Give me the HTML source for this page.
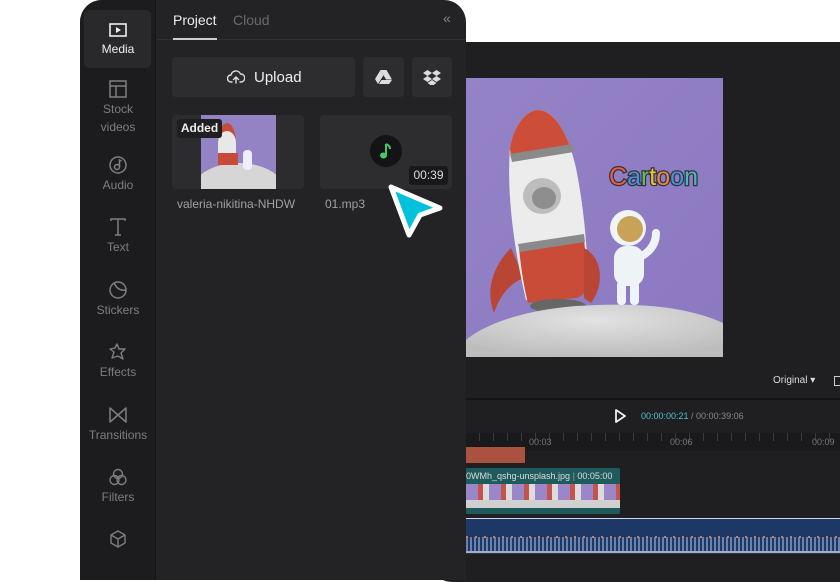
<!DOCTYPE html>
<html><head><meta charset="utf-8"><style>
*{margin:0;padding:0;box-sizing:border-box}
body{width:840px;height:560px;overflow:hidden;background:#fff;font-family:"Liberation Sans",sans-serif;position:relative}
.abs{position:absolute}
.back{left:430px;top:42px;width:440px;height:540px;background:#1f1f21;border-radius:22px}
.panel{left:80px;top:0;width:386px;height:580px;background:#232325;border-radius:22px 22px 0 0;overflow:hidden}
.side{left:0;top:0;width:76px;height:100%;background:#1c1c1e;border-right:1px solid #151517}
.item{position:absolute;left:0;width:76px;text-align:center;color:#7e7e82;font-size:12px;line-height:18px}
.item svg{display:block;margin:0 auto 2px}
.btn{background:#2d2d30;border-radius:4px}
.t{color:#9a9a9e;font-size:12px}
</style></head><body>
<div class="abs back"></div>
<!-- preview image -->
<svg class="abs" style="left:466px;top:78px" width="257" height="279" viewBox="0 0 257 279">
<defs><linearGradient id="bg" x1="0" y1="0" x2="1" y2="1"><stop offset="0" stop-color="#9583c6"/><stop offset="1" stop-color="#8b78c2"/></linearGradient>
<radialGradient id="moon" cx="0.5" cy="0.3" r="0.7"><stop offset="0" stop-color="#e2e2e2"/><stop offset="1" stop-color="#bdbdbd"/></radialGradient></defs>
<rect width="257" height="279" fill="url(#bg)"/>
<path d="M45 170 C25 190 20 215 28 235 C35 215 45 205 58 200Z" fill="#b94534"/>
<path d="M44 70 C48 45 62 32 72 32 C88 32 102 55 110 90 C118 130 122 175 122 210 L60 222 C50 180 40 120 44 70Z" fill="#ececec"/>
<path d="M44 70 C48 45 62 32 72 32 C86 32 98 50 105 72 L46 82 C45 78 44 74 44 70Z" fill="#cc4d38"/>
<path d="M44 76 L106 66 L108 74 L46 84Z" fill="#8a8a8a"/>
<path d="M53 170 L118 160 L122 205 C122 212 118 218 110 220 L62 225 C58 210 55 190 53 170Z" fill="#c94c38"/>
<path d="M52 166 L118 156 L119 164 L54 174Z" fill="#8a8a8a"/>
<path d="M118 170 C135 178 140 205 125 225 L118 220Z" fill="#b94534"/>
<ellipse cx="92" cy="228" rx="28" ry="7" fill="#666"/>
<ellipse cx="76" cy="118" rx="19" ry="18" fill="#bdbdbd"/><ellipse cx="78" cy="120" rx="12" ry="11" fill="#8e8e8e"/>
<path d="M0 279 L0 262 C20 245 60 232 110 228 C170 224 220 228 257 245 L257 279Z" fill="url(#moon)"/>
<circle cx="162" cy="150" r="18" fill="#f0f4f6"/><circle cx="164" cy="151" r="13" fill="#c9a25a"/>
<rect x="148" y="168" width="30" height="40" rx="12" fill="#eef3f6"/>
<rect x="151" y="203" width="9" height="24" rx="4" fill="#eef3f6"/><rect x="164" y="203" width="9" height="24" rx="4" fill="#eef3f6"/>
<path d="M176 178 C186 172 190 164 190 155" stroke="#eef3f6" stroke-width="8" stroke-linecap="round" fill="none"/>
<text x="143" y="107" font-family="Liberation Sans" font-size="25" stroke="#333" stroke-width="2.5" paint-order="stroke"><tspan fill="#e85d4f">C</tspan><tspan fill="#4a90e2">a</tspan><tspan fill="#5bc06b">r</tspan><tspan fill="#f1c232">t</tspan><tspan fill="#e8844f">o</tspan><tspan fill="#4a90e2">o</tspan><tspan fill="#4ab6c9">n</tspan></text>
</svg>
<!-- timeline -->
<div class="abs" style="left:773px;top:375px;color:#ddd;font-size:10px">Original ▾</div>
<div class="abs" style="left:834px;top:376px;width:8px;height:10px;border:1.5px solid #ccc"></div>
<div class="abs" style="left:466px;top:398px;width:374px;height:2px;background:#141416"></div>
<svg class="abs" style="left:614px;top:409px" width="12" height="14"><path d="M2 1 L11 7 L2 13Z" fill="none" stroke="#eee" stroke-width="1.8" stroke-linejoin="round"/></svg>
<div class="abs" style="left:641px;top:411px;font-size:9px;color:#888"><span style="color:#4fc3d9">00:00:00:21</span> / 00:00:39:06</div>
<div class="abs" style="left:466px;top:433px;width:374px;height:18px;background:#1a1a1c"></div>
<div class="abs" style="left:466px;top:433px;width:374px;height:8px;background:repeating-linear-gradient(90deg,transparent 0 13px,#3a3a3c 13px 14px)"></div>
<div class="abs t" style="left:529px;top:437px;font-size:9px;color:#777">00:03</div>
<div class="abs t" style="left:670px;top:437px;font-size:9px;color:#777">00:06</div>
<div class="abs t" style="left:812px;top:437px;font-size:9px;color:#777">00:09</div>
<div class="abs" style="left:466px;top:447px;width:59px;height:16px;background:#a9523f"></div>
<div class="abs" style="left:466px;top:468px;width:154px;height:46px;background:#1f5a5c;border-radius:0 2px 2px 0"></div>
<div class="abs" style="left:466px;top:471px;font-size:9px;color:#ddd;white-space:nowrap">0WMh_qshg-unsplash.jpg <span style="color:#999">|</span> 00:05:00</div>
<div class="abs" style="left:466px;top:484px;width:154px;height:24px;background:repeating-linear-gradient(90deg,#9a86c8 0 12px,#c4534a 12px 17px,#dcdcdc 17px 23px)"></div>
<div class="abs" style="left:466px;top:500px;width:154px;height:8px;background:#d0d0d0"></div>
<div class="abs" style="left:466px;top:518px;width:374px;height:36px;background:#1d3866;border-top:1px solid #cfd8e8"></div>
<div class="abs" style="left:466px;top:537px;width:374px;height:14px;background:repeating-linear-gradient(90deg,#6c82aa 0 2px,transparent 2px 4px)"></div>
<div class="abs" style="left:466px;top:536px;width:374px;height:2px;background:repeating-linear-gradient(90deg,#d77a4a 0 2px,transparent 2px 9px)"></div>
<div class="abs" style="left:466px;top:551px;width:374px;height:2px;background:#aab"></div>
<!-- left panel -->
<div class="abs panel">
 <div class="abs side">
  <div class="abs" style="left:4px;top:10px;width:67px;height:58px;background:#29292c;border-radius:5px"></div>
  <div class="item" style="top:22px;color:#f0f0f0"><svg width="18" height="16"><rect x="1" y="2" width="16" height="12" fill="none" stroke="#eee" stroke-width="1.6"/><path d="M7 5 L12 8 L7 11Z" fill="#eee"/></svg>Media</div>
  <div class="item" style="top:80px"><svg width="18" height="18"><rect x="1" y="1" width="16" height="16" fill="none" stroke="#7e7e82" stroke-width="1.5"/><path d="M1 6H17M7 6V17" stroke="#7e7e82" stroke-width="1.5"/></svg>Stock<br>videos</div>
  <div class="item" style="top:156px"><svg width="18" height="18"><circle cx="9" cy="9" r="8" fill="none" stroke="#7e7e82" stroke-width="1.5"/><circle cx="8" cy="11" r="2.5" fill="none" stroke="#7e7e82" stroke-width="1.5"/><path d="M10.5 11V4l2 1" fill="none" stroke="#7e7e82" stroke-width="1.5"/></svg>Audio</div>
  <div class="item" style="top:218px"><svg width="18" height="18"><path d="M2 3V1H16V3M9 1V17M6 17H12" fill="none" stroke="#7e7e82" stroke-width="1.5"/></svg>Text</div>
  <div class="item" style="top:281px"><svg width="18" height="18"><circle cx="9" cy="9" r="8" fill="none" stroke="#7e7e82" stroke-width="1.5"/><path d="M5 2 C8 8 12 10 17 9" fill="none" stroke="#7e7e82" stroke-width="1.5"/></svg>Stickers</div>
  <div class="item" style="top:343px"><svg width="18" height="18"><path d="M8 1L10 6L16 6L12 10L14 16L9 13L3 15L5 9L1 6L6 5Z" fill="none" stroke="#7e7e82" stroke-width="1.4" stroke-linejoin="round"/></svg>Effects</div>
  <div class="item" style="top:406px"><svg width="18" height="18"><path d="M1 2V16L17 2V16Z" fill="none" stroke="#7e7e82" stroke-width="1.5" stroke-linejoin="round"/></svg>Transitions</div>
  <div class="item" style="top:468px"><svg width="18" height="18"><circle cx="9" cy="6" r="4.5" fill="none" stroke="#7e7e82" stroke-width="1.4"/><circle cx="5.5" cy="12" r="4.5" fill="none" stroke="#7e7e82" stroke-width="1.4"/><circle cx="12.5" cy="12" r="4.5" fill="none" stroke="#7e7e82" stroke-width="1.4"/></svg>Filters</div>
  <div class="item" style="top:530px"><svg width="18" height="18"><path d="M9 1L16 5V13L9 17L2 13V5ZM2 5L9 9L16 5M9 9V17" fill="none" stroke="#7e7e82" stroke-width="1.4" stroke-linejoin="round"/></svg></div>
 </div>
 <div class="abs" style="left:93px;top:12px;color:#eee;font-size:14px">Project</div>
 <div class="abs" style="left:153px;top:12px;color:#6a6a6e;font-size:14px">Cloud</div>
 <div class="abs" style="left:77px;top:39px;width:309px;height:1px;background:#303033"></div>
 <div class="abs" style="left:93px;top:38px;width:44px;height:2px;background:#ccc"></div>
 <div class="abs" style="left:363px;top:10px;color:#888;font-size:14px">«</div>
 <div class="abs btn" style="left:92px;top:57px;width:183px;height:40px"></div>
 <svg class="abs" style="left:147px;top:69px" width="18" height="16"><path d="M5 13H4A3.5 3.5 0 0 1 4 6 A5 5 0 0 1 13.5 5 A3.5 3.5 0 0 1 14 13H13M9 14V8M6.5 10.5L9 8L11.5 10.5" fill="none" stroke="#ddd" stroke-width="1.4" stroke-linecap="round" stroke-linejoin="round"/></svg>
 <div class="abs" style="left:174px;top:69px;color:#eee;font-size:15px">Upload</div>
 <div class="abs btn" style="left:283px;top:57px;width:41px;height:40px"></div>
 <svg class="abs" style="left:295px;top:70px" width="17" height="14"><path d="M5.5 0H11.5L17 9.5H11Z" fill="#ddd"/><path d="M5.5 0L8.5 5.2L3 14L0 9Z" fill="#ddd"/><path d="M4 14H14L17 10H6.5Z" fill="#ddd"/></svg>
 <div class="abs btn" style="left:332px;top:57px;width:40px;height:40px"></div>
 <svg class="abs" style="left:343px;top:69px" width="18" height="16"><path d="M4.5 1L0 4L4.5 7L9 4ZM13.5 1L9 4L13.5 7L18 4ZM0 10L4.5 13L9 10L4.5 7ZM18 10L13.5 13L9 10L13.5 7ZM4.5 14L9 17L13.5 14L9 11Z" fill="#ddd"/></svg>
 <div class="abs btn" style="left:92px;top:115px;width:132px;height:74px;background:#2c2c2f"></div>
 <div class="abs" style="left:121px;top:115px;width:75px;height:74px;background:#9483c4;overflow:hidden">
  <div class="abs" style="left:-10px;top:48px;width:95px;height:60px;border-radius:50%;background:#d6d6d6"></div>
  <div class="abs" style="left:17px;top:8px;width:18px;height:40px;border-radius:50% 50% 20% 20%;background:#e8e8e8;border-top:8px solid #c64b38"></div>
  <div class="abs" style="left:17px;top:38px;width:20px;height:12px;background:#c64b38"></div>
  <div class="abs" style="left:42px;top:35px;width:9px;height:20px;border-radius:4px;background:#eef"></div>
 </div>
 <div class="abs" style="left:97px;top:119px;width:45px;height:19px;background:#1f1f21;border-radius:3px;color:#eee;font-size:12px;font-weight:bold;line-height:19px;text-align:center">Added</div>
 <div class="abs t" style="left:97px;top:197px;font-size:12px;color:#a0a0a4">valeria-nikitina-NHDW</div>
 <div class="abs btn" style="left:240px;top:115px;width:132px;height:74px"></div>
 <div class="abs" style="left:290px;top:135px;width:32px;height:32px;border-radius:50%;background:#141416"></div>
 <svg class="abs" style="left:299px;top:142px" width="14" height="18"><path d="M7 2V13" stroke="#4cc467" stroke-width="2"/><path d="M7 2C9 3 11 4 11 7" stroke="#4cc467" stroke-width="2" fill="none"/><ellipse cx="4.5" cy="13.5" rx="3.5" ry="3" fill="#4cc467"/></svg>
 <div class="abs" style="left:329px;top:166px;width:39px;height:19px;background:#19191b;border-radius:3px;color:#ddd;font-size:12px;line-height:19px;text-align:center">00:39</div>
 <div class="abs t" style="left:245px;top:197px;font-size:12px;color:#a0a0a4">01.mp3</div>
</div>
<svg class="abs" style="left:380px;top:176px" width="70" height="70"><path d="M11 11L60 32L40 39L29 59Z" fill="#00c2dc" stroke="#fff" stroke-width="5" stroke-linejoin="round"/></svg>
</body></html>
